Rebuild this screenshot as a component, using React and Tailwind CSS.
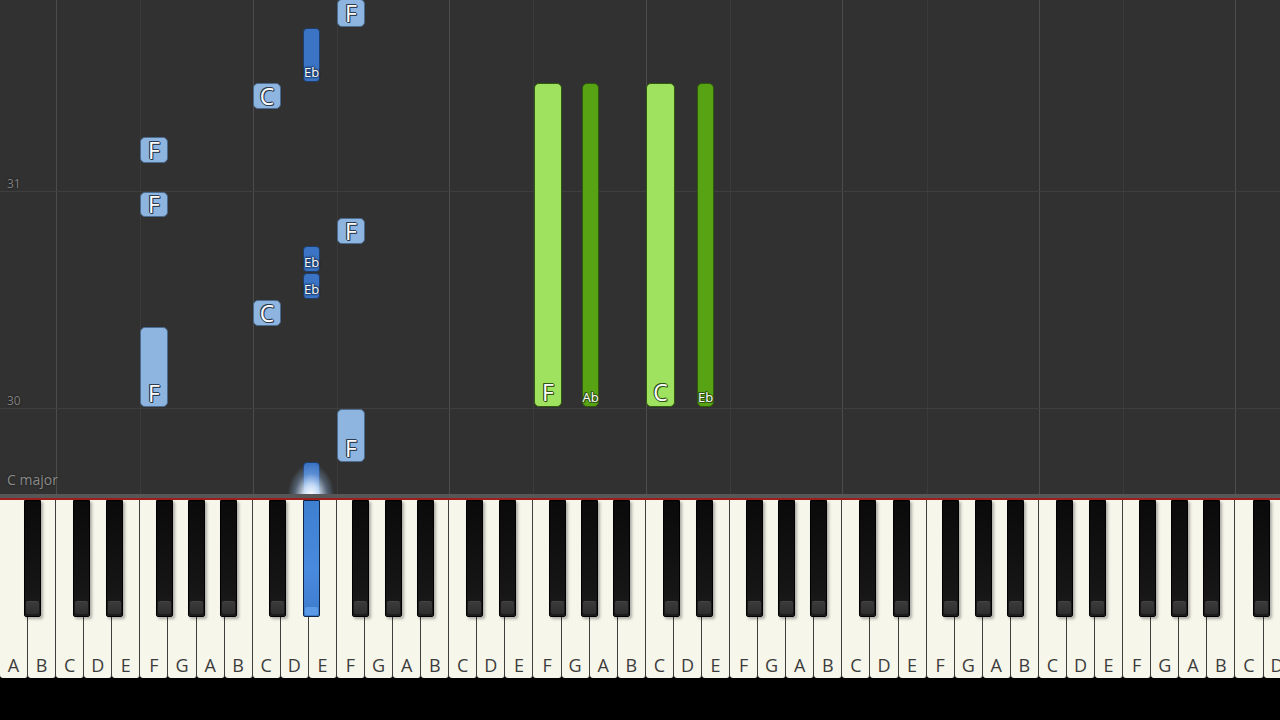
import React from "react";

const W = 28.09;
const NAMES = ["A", "B", "C", "D", "E", "F", "G"];
const whiteKeys = Array.from({ length: 46 }, (_, i) => NAMES[i % 7]);
// black key offset from the white key boundary, per note before it
const BLACK_OFFSET = { C: -3, D: 2.3, F: -4.3, G: 0, A: 4 };
const ACTIVE_BLACK = 10; // D# above the second D

const blackKeys = whiteKeys
  .map((name, i) => (name in BLACK_OFFSET ? { i, left: (i + 1) * W + BLACK_OFFSET[name] - 8.5 } : null))
  .filter(Boolean);

const outline =
  "[text-shadow:1px_0_#2b3a4d,-1px_0_#2b3a4d,0_1px_#2b3a4d,0_-1px_#2b3a4d,1px_1px_#2b3a4d,-1px_-1px_#2b3a4d]";
const greenOutline =
  "[text-shadow:1px_0_#2e5212,-1px_0_#2e5212,0_1px_#2e5212,0_-1px_#2e5212,1px_1px_#2e5212,-1px_-1px_#2e5212]";
const smallOutline = "[text-shadow:0_0_2px_#10203a,0_0_2px_#10203a,0_0_3px_#10203a]";

const lightNotes = [
  { cls: "left-[140px] top-[137px] h-[26px]", label: "F", bottom: false },
  { cls: "left-[140px] top-[192px] h-[25px]", label: "F", bottom: false },
  { cls: "left-[140px] top-[327px] h-[80px]", label: "F", bottom: true },
  { cls: "left-[337px] top-[-1px] h-[28px]", label: "F", bottom: false },
  { cls: "left-[337px] top-[218px] h-[26px]", label: "F", bottom: false },
  { cls: "left-[337px] top-[409px] h-[53px]", label: "F", bottom: true },
  { cls: "left-[253px] top-[83px] h-[26px]", label: "C", bottom: false },
  { cls: "left-[253px] top-[300px] h-[26px]", label: "C", bottom: false },
];

const darkNotes = [
  { cls: "top-[28px] h-[54px]", label: "Eb" },
  { cls: "top-[246px] h-[26px]", label: "Eb" },
  { cls: "top-[273px] h-[26px]", label: "Eb" },
  { cls: "top-[462px] h-[34px]", label: "" },
];

const greenBars = [
  { cls: "left-[534px] w-[28px] bg-[#9fe260]", label: "F", big: true },
  { cls: "left-[582px] w-[17px] bg-[#58a313]", label: "Ab", big: false },
  { cls: "left-[646px] w-[29px] bg-[#9fe260]", label: "C", big: true },
  { cls: "left-[697px] w-[17px] bg-[#58a313]", label: "Eb", big: false },
];

function Roll() {
  return (
    <div className="relative h-[494px] shrink-0 overflow-hidden bg-[#313131]">
      {/* column lines on C and F */}
      <div className="absolute inset-0 flex">
        {whiteKeys.map((name, i) => (
          <div
            key={i}
            className={
              "h-full w-[28.09px] shrink-0 " +
              (name === "C" ? "border-l border-[#4c4c4c]" : name === "F" ? "border-l border-[#3b3b3b]" : "")
            }
          />
        ))}
      </div>

      {/* measure lines */}
      <div className="absolute left-0 right-0 top-[191px] h-px bg-[#3e3e3e]" />
      <div className="absolute left-0 right-0 top-[408px] h-px bg-[#3e3e3e]" />
      <span className="absolute left-[7px] top-[175px] text-[12px] text-[#808080] [text-shadow:0_0_2px_#111]">31</span>
      <span className="absolute left-[7px] top-[392px] text-[12px] text-[#808080] [text-shadow:0_0_2px_#111]">30</span>
      <span className="absolute left-[7px] top-[469px] text-[14px] text-[#8a8a8a] [text-shadow:0_0_2px_#1a1a1a]">C major</span>

      {lightNotes.map((n, i) => (
        <div
          key={i}
          className={
            "absolute w-[28px] rounded-[5px] border border-[#4b6b8f] bg-[#8db5df] flex justify-center " +
            (n.bottom ? "items-end pb-px " : "items-center ") +
            n.cls
          }
        >
          <span className={"text-[23px] leading-none text-white " + outline}>{n.label}</span>
        </div>
      ))}

      {darkNotes.map((n, i) => (
        <div
          key={i}
          className={
            "absolute left-[303px] w-[17px] rounded-[4px] border border-[#1f3d6a] bg-[#3b74c4] flex items-end justify-center pb-[2px] " +
            n.cls
          }
        >
          {n.label && <span className={"text-[13px] leading-none text-white " + smallOutline}>{n.label}</span>}
        </div>
      ))}

      {/* hit sparkle */}
      <div className="absolute left-[288px] top-[464px] h-[32px] w-[46px] bg-[radial-gradient(ellipse_at_bottom,rgba(255,255,255,1)_0%,rgba(220,236,255,0.85)_25%,rgba(150,190,240,0.35)_50%,transparent_72%)]" />

      {greenBars.map((b, i) => (
        <div
          key={i}
          className={
            "absolute top-[83px] h-[324px] rounded-[5px] border border-[#2f5a0c] flex items-end justify-center pb-[2px] " +
            b.cls
          }
        >
          <span
            className={
              (b.big ? "text-[23px] " : "text-[13px] ") + "leading-none text-white " + greenOutline
            }
          >
            {b.label}
          </span>
        </div>
      ))}
    </div>
  );
}

function Keyboard() {
  return (
    <div className="relative flex h-[178px] shrink-0 overflow-hidden">
      {whiteKeys.map((name, i) => (
        <div
          key={i}
          className="flex h-full w-[28.09px] shrink-0 items-end justify-center rounded-b-[3px] border-r border-[#3e3e3c] bg-[#f7f6eb] pb-[4px]"
        >
          <span className="text-[18px] leading-none text-[#3c3c3c]">{name}</span>
        </div>
      ))}

      {blackKeys.map((k) =>
        k.i === ACTIVE_BLACK ? (
          <div
            key={k.i}
            className="absolute top-0 h-[117px] w-[17px] rounded-b-[2px] border border-[#102544] bg-[linear-gradient(to_bottom,#3f7fd0,#4a8ade_60%,#3d7bcc)]"
            style={{ left: k.left }}
          >
            <div className="absolute bottom-[1px] left-[1px] right-[1px] h-[8px] rounded-[2px] bg-[#5b9be6]" />
          </div>
        ) : (
          <div
            key={k.i}
            className="absolute top-0 h-[117px] w-[17px] rounded-b-[2px] border border-black bg-[linear-gradient(to_bottom,#0a0a0a,#161616_80%,#1d1d1d)] shadow-[2px_2px_3px_rgba(0,0,0,0.3)]"
            style={{ left: k.left }}
          >
            <div className="absolute bottom-[2px] left-[1px] right-[1px] h-[13px] rounded-[2px] border-t border-[#444] bg-[linear-gradient(to_bottom,#3a3a3a,#2e2e2e)]" />
          </div>
        )
      )}
    </div>
  );
}

export default function App() {
  return (
    <div className="flex h-[720px] w-[1280px] flex-col overflow-hidden bg-black font-['Open_Sans',sans-serif]">
      <Roll />
      <div className="h-[4px] shrink-0 bg-[#575757]" />
      <div className="h-[2px] shrink-0 bg-[#9e1d1d]" />
      <Keyboard />
      <div className="flex-1 bg-black" />
    </div>
  );
}
